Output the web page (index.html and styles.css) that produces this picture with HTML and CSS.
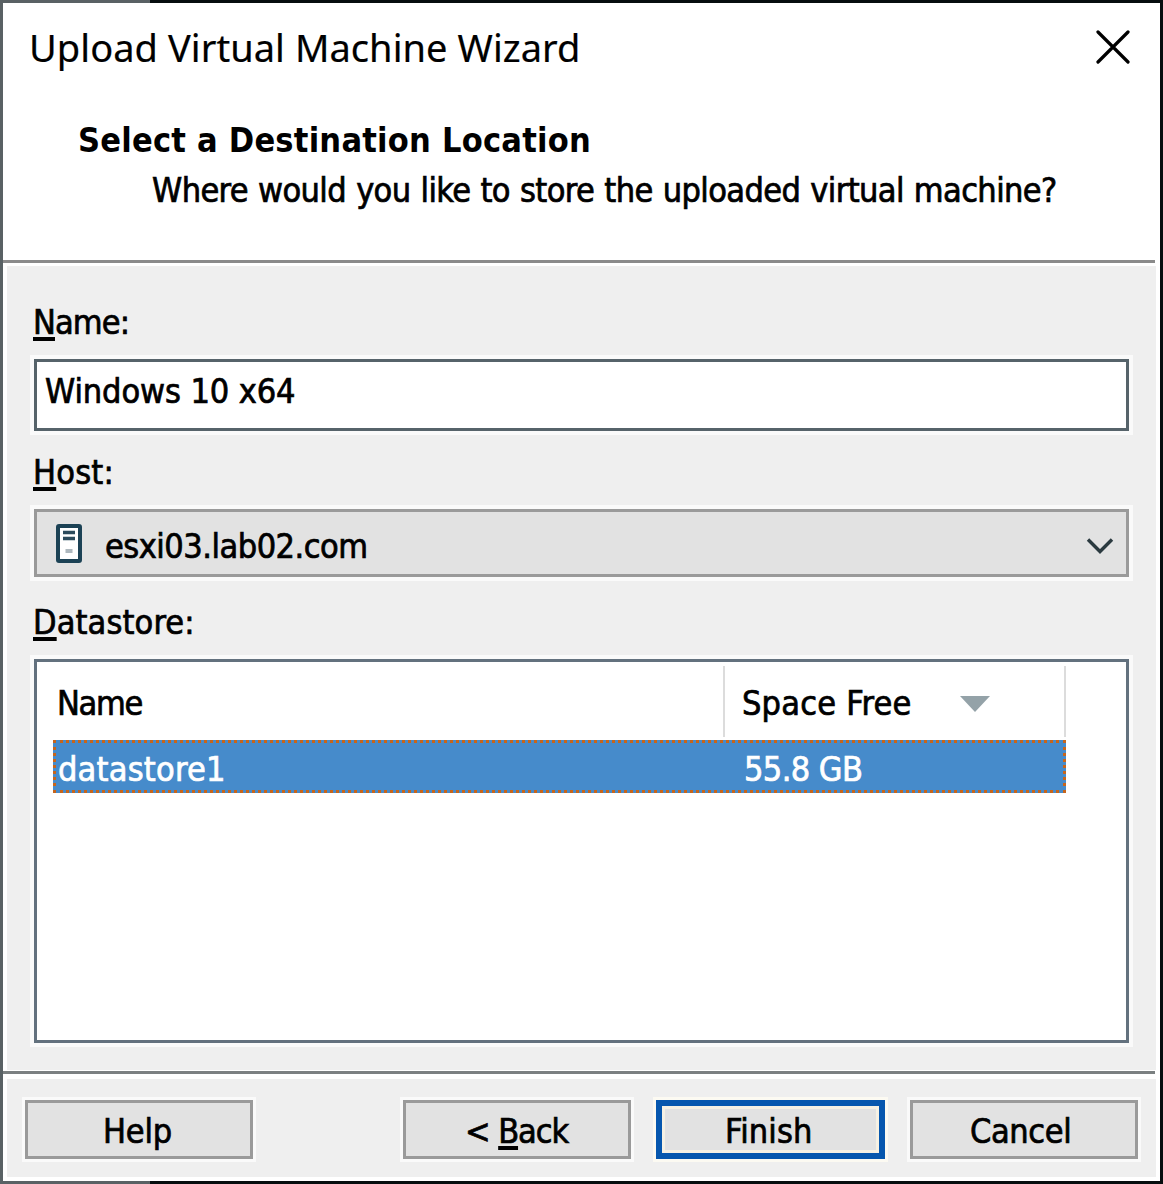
FILE: index.html
```
<!DOCTYPE html>
<html lang="en">
<head>
<meta charset="utf-8">
<title>Upload Virtual Machine Wizard</title>
<link rel="stylesheet" href="styles.css">
</head>
<body>
<div class="frame">
  <main class="window">
    <header class="header">
      <div class="titlebar">
        <h1 class="title">Upload Virtual Machine Wizard</h1>
        <svg class="close" width="34" height="34" viewBox="0 0 34 34" aria-label="Close"><path d="M2 2 L32 32 M32 2 L2 32"/></svg>
      </div>
      <h2 class="heading">Select a Destination Location</h2>
      <p class="subheading">Where would you like to store the uploaded virtual machine?</p>
    </header>
    <div class="rule"></div>
    <section class="form">
      <div class="label"><u>N</u>ame:</div>
      <div class="input">Windows 10 x64</div>
      <div class="label label-host"><u>H</u>ost:</div>
      <div class="select">
        <svg class="server" width="26" height="39" viewBox="0 0 26 39">
          <rect class="case" x="2" y="2" width="22" height="35" rx="1"/>
          <path class="slot" d="M7 8.500H19M7 14.500H19"/>
          <rect class="light" x="9.500" y="25" width="7" height="4"/>
        </svg>
        <span class="host">esxi03.lab02.com</span>
        <svg class="chevron" width="28" height="18" viewBox="0 0 28 18"><path d="M2 2.500 L14 14.500 L26 2.500"/></svg>
      </div>
      <div class="label label-store"><u>D</u>atastore:</div>
      <div class="list">
        <div class="columns">
          <div class="column name">Name</div>
          <div class="column space"><span>Space Free</span>
            <svg width="30" height="16" viewBox="0 0 30 16"><path d="M0 0H30L15 16Z"/></svg>
          </div>
        </div>
        <div class="row">
          <span class="row-name">datastore1</span>
          <span class="row-space">55.8 GB</span>
        </div>
      </div>
    </section>
    <div class="rule rule-bottom"></div>
    <footer class="buttons">
      <div class="button help"><span>Help</span></div>
      <div class="button back"><span>&lt; <u>B</u>ack</span></div>
      <div class="button finish"><span>Finish</span></div>
      <div class="button cancel"><span>Cancel</span></div>
    </footer>
  </main>
</div>
</body>
</html>
```
FILE: styles.css
```
* { box-sizing: border-box; }

body {
  margin: 0;
  color: #000;
  font: 34px/40px "DejaVu Sans Condensed", "DejaVu Sans", sans-serif;
  -webkit-text-stroke: 0.7px currentColor;
  white-space: nowrap;
}

u {
  text-decoration: underline 3.500px;
  text-underline-offset: 3px;
  text-decoration-skip-ink: none;
}

.frame {
  width: 1163px;
  height: 1184px;
  padding: 3px;
  background: linear-gradient(90deg, #596164 150px, #060d0e 150px);
}

.window {
  display: flex;
  flex-direction: column;
  height: 1178px;
  background: #fff;
}

.header { height: 257px; }

.titlebar {
  display: flex;
  justify-content: space-between;
  padding: 18px 30px 0 26px;
  height: 97px;
}

.title {
  margin: 0;
  font: 38px/52px "Noto Sans", sans-serif;
  letter-spacing: 0.060px;
  -webkit-text-stroke: 0.2px currentColor;
}

.close { margin-top: 9px; }
.close path { fill: none; stroke: #000; stroke-width: 3.200; stroke-linecap: round; }

.heading {
  margin: 20px 0 0 75px;
  font-size: 34px;
  line-height: 40px;
  letter-spacing: 0.230px;
  -webkit-text-stroke: 0;
}

.subheading {
  margin: 10px 0 0 149px;
  letter-spacing: -0.620px;
  word-spacing: 1px;
}

.rule {
  flex: none;
  height: 3px;
  margin: 0 5px 3px 0;
  background: #8a8a8a;
}

.rule-bottom { margin: 1px 5px 5px 0; height: 3px; background: #7b8081; }

.form {
  height: 804px;
  margin: 0 4px;
  padding: 36px 27px 0;
  background: #efefef;
}

.label { margin: 0 0 17px -1px; letter-spacing: -0.900px; }
.label-host { margin-top: 21px; letter-spacing: 0.200px; }
.label-store { margin-top: 25px; letter-spacing: 0.100px; }

.input, .select, .list { box-shadow: 0 0 0 4px #fafafa; }

.input {
  height: 72px;
  padding: 9px 8px;
  border: 3px solid #56636a;
  background: #fff;
  letter-spacing: -0.100px;
}

.select {
  display: flex;
  align-items: center;
  height: 68px;
  padding: 0 12px 0 19px;
  border: 3px solid #9a9a9a;
  background: #e2e2e2;
}

.host { margin: 6px auto 0 23px; letter-spacing: -0.500px; }
.case { fill: #fff; stroke: #1c4255; stroke-width: 4; }
.slot { stroke: #2b4b5c; stroke-width: 3.500; fill: none; }
.light { fill: #aeb8be; }
.chevron { margin-top: 5px; }
.chevron path { fill: none; stroke: #2b3a40; stroke-width: 3.400; }

.list {
  height: 384px;
  padding: 4px 16px;
  border: 3px solid #63717e;
  background: #fff;
}

.columns { display: flex; height: 71px; }
.column { padding-top: 17px; border-right: 2px solid #dcdcdc; }
.name { width: 672px; padding-left: 4px; letter-spacing: -1.300px; }
.space {
  display: flex;
  width: 341px;
  padding-left: 17px;
  letter-spacing: 0.200px;
}
.space svg { margin: 13px 0 0 48px; }
.space path { fill: #94a2a8; }

.row {
  display: flex;
  width: 1013px;
  height: 53px;
  margin-top: 3px;
  padding: 6px 0 0 2px;
  border: 3px dotted #c7651b;
  background: #468bcb;
  color: #fff;
}
.row-name { width: 686px; letter-spacing: 0.200px; }
.row-space { letter-spacing: -0.600px; }

.buttons {
  display: flex;
  height: 98px;
  margin: 0 4px;
  padding: 21px 18px 0;
  background: #efefef;
}

.button {
  width: 228px;
  height: 59px;
  padding-top: 8px;
  border: 3px solid #9a9a9a;
  background: #e2e2e2;
  box-shadow: 0 0 0 3px #fafafa;
}
.help { padding-left: 75px; letter-spacing: -0.200px; }
.back { margin-left: 150px; padding-left: 59px; letter-spacing: -1.100px; }
.finish {
  margin-left: 25px;
  width: 229px;
  padding: 5px 0 0 63px;
  border: 6px solid #0757ae;
  box-shadow: 0 0 0 3px #fcfaf2, inset 0 0 0 3px #f6f1e4;
  letter-spacing: 0.100px;
}
.cancel { margin-left: 25px; padding-left: 57px; letter-spacing: -0.400px; }
```
